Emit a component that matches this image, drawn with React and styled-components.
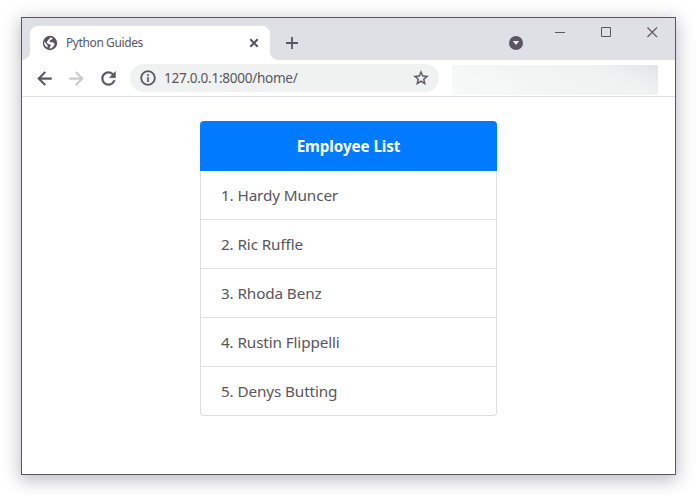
import React from "react";
import styled, { createGlobalStyle } from "styled-components";
import { MdArrowBack, MdArrowForward, MdRefresh, MdInfoOutline, MdStarBorder } from "react-icons/md";

const INK = "#5a5560";
const STRIP = "#dfe0e5";

const GlobalStyle = createGlobalStyle`
  * { box-sizing: border-box; }
  body { margin: 0; background: #fff; font-family: "Noto Sans", "Open Sans", sans-serif; overflow: hidden; }
`;

const Desktop = styled.div`
  height: 495px;
  padding: 17px 22px 20px 21px;
`;

const Window = styled.main`
  display: flex;
  flex-direction: column;
  width: 655px;
  height: 458px;
  border: 1px solid ${INK};
  background: #fff;
  box-shadow: 0 4px 16px 1px rgba(70, 65, 85, 0.36);
`;

const TabStrip = styled.header`
  display: flex;
  height: 42px;
  background: ${STRIP};
`;

const TabFoot = styled.span`
  align-self: flex-end;
  width: 8px;
  height: 8px;
  background: radial-gradient(circle at ${(p) => (p.$side === "left" ? "0 0" : "100% 0")}, ${STRIP} 7.5px, #fff 8.2px);
`;

const Tab = styled.div`
  display: flex;
  align-items: center;
  width: 240px;
  height: 34px;
  margin-top: 8px;
  padding: 0 11px 0 12px;
  border-radius: 8px 8px 0 0;
  background: #fff;
`;

const TabTitle = styled.span`
  flex: 1;
  margin-left: 8px;
  color: ${INK};
  font-size: 12px;
  line-height: 16px;
  letter-spacing: -0.4px;
`;

const Glyph = styled.svg`
  display: block;
  flex: none;
  width: ${(p) => p.$size}px;
  height: ${(p) => p.$size}px;
`;

const NewTab = styled.div`
  display: flex;
  align-items: center;
  margin: 8px 0 0 8px;
`;

const WindowControls = styled.div`
  display: flex;
  gap: 35px;
  margin: 9px 17px 0 auto;
`;

const TabSearch = styled.div`
  margin: 18px 0 0 211px;
`;

const Toolbar = styled.div`
  display: flex;
  align-items: center;
  height: 37px;
  padding: 0 17px 0 6px;
  border-bottom: 1px solid ${STRIP};
`;

const NavButton = styled.span`
  display: flex;
  justify-content: center;
  width: 32px;
  color: ${(p) => (p.$disabled ? "#cdc8c6" : INK)};

  path:not([fill="none"]) { stroke: currentColor; stroke-width: 0.5px; }
  path[fill="none"] { stroke: none; }
`;

const AddressBar = styled.div`
  display: flex;
  align-items: center;
  width: 309px;
  height: 28px;
  margin-left: 6px;
  padding: 0 9px;
  border-radius: 14px;
  background: #f0f2f2;
  color: ${INK};

  path:not([fill="none"]) { stroke: currentColor; stroke-width: 0.4px; }
  path[fill="none"] { stroke: none; }
`;

const Url = styled.span`
  flex: 1;
  margin-left: 7px;
  font-size: 13.6px;
  line-height: 20px;
  letter-spacing: -0.3px;
`;

const ExtensionArea = styled.div`
  width: 206px;
  height: 30px;
  margin: 3px 0 0 13px;
  background: linear-gradient(25deg, #f8f9f9 0%, #f2f4f4 50%, #f0f2f2 75%, #e3e4e7 100%);
`;

const Page = styled.section`
  display: flex;
  justify-content: center;
  align-items: flex-start;
  padding-top: 24px;
`;

const ListGroup = styled.ul`
  width: 297px;
  margin: 0;
  padding: 0;
  list-style: none;
`;

const ListHeading = styled.li`
  height: 50px;
  border-radius: 4px 4px 0 0;
  background: #007bff;
  color: #fff;
  font-size: 15.2px;
  font-weight: 700;
  line-height: 51px;
  letter-spacing: -0.07px;
  text-align: center;
`;

const ListItem = styled.li`
  height: 49px;
  padding-left: 20px;
  border: 1px solid #dfdfe3;
  border-top: 0;
  color: ${INK};
  font-size: 15.3px;
  line-height: 49px;
  letter-spacing: -0.13px;

  &:last-child { border-radius: 0 0 4px 4px; }
`;

const employees = ["Hardy Muncer", "Ric Ruffle", "Rhoda Benz", "Rustin Flippelli", "Denys Butting"];

const Globe = () => (
  <Glyph $size={16} viewBox="0 0 16 16">
    <circle cx="8" cy="8" r="7.2" fill={INK} />
    <path d="M8.5 2.6 10.5 3 10.3 4.2 8.2 5 7.4 6.7 8.8 7.2H11L12 8.6 12.8 8.8 11.5 11.4 9 13.4 7.2 13.2 8.8 10.7 8.2 9.5 5.8 8.7 4.7 7.3 6 5.3Z M2.2 6.5 4.2 8.8 5.6 10.5 5.6 12.5A5.8 5.8 0 0 1 2.2 6.5Z" fill="#fff" />
  </Glyph>
);

const CloseTab = () => (
  <Glyph $size={10} viewBox="0 0 10 10">
    <path d="M1.3 1.3 8.7 8.7M8.7 1.3 1.3 8.7" stroke={INK} strokeWidth="2" />
  </Glyph>
);

const Plus = () => (
  <Glyph $size={12} viewBox="0 0 12 12">
    <path d="M6 0V12M0 6H12" stroke={INK} strokeWidth="1.8" />
  </Glyph>
);

const CaretDisc = () => (
  <Glyph $size={14} viewBox="0 0 14 14">
    <circle cx="7" cy="7" r="7" fill={INK} />
    <path d="M3.8 5H10.2L7 9Z" fill="#eeeef1" />
  </Glyph>
);

const Minimize = () => (
  <Glyph $size={11} viewBox="0 0 11 11">
    <path d="M0 5.5H10" stroke={INK} />
  </Glyph>
);

const Maximize = () => (
  <Glyph $size={11} viewBox="0 0 11 11">
    <path d="M.5 .5H9.5V9.5H.5Z" fill="none" stroke={INK} />
  </Glyph>
);

const CloseWindow = () => (
  <Glyph $size={11} viewBox="0 0 11 11">
    <path d="M.5 .5 10 10M10 .5 .5 10" stroke={INK} strokeWidth="1.1" />
  </Glyph>
);

export default function App() {
  return (
    <Desktop>
      <GlobalStyle />
      <Window>
        <TabStrip>
          <TabFoot $side="left" />
          <Tab>
            <Globe />
            <TabTitle>Python Guides</TabTitle>
            <CloseTab />
          </Tab>
          <TabFoot $side="right" />
          <NewTab><Plus /></NewTab>
          <TabSearch><CaretDisc /></TabSearch>
          <WindowControls>
            <Minimize />
            <Maximize />
            <CloseWindow />
          </WindowControls>
        </TabStrip>
        <Toolbar>
          <NavButton><MdArrowBack size={21} /></NavButton>
          <NavButton $disabled><MdArrowForward size={21} /></NavButton>
          <NavButton><MdRefresh size={21} /></NavButton>
          <AddressBar>
            <MdInfoOutline size={18} />
            <Url>127.0.0.1:8000/home/</Url>
            <MdStarBorder size={18} />
          </AddressBar>
          <ExtensionArea />
        </Toolbar>
        <Page>
          <ListGroup>
            <ListHeading>Employee List</ListHeading>
            {employees.map((name, i) => (
              <ListItem key={name}>{`${i + 1}. ${name}`}</ListItem>
            ))}
          </ListGroup>
        </Page>
      </Window>
    </Desktop>
  );
}
